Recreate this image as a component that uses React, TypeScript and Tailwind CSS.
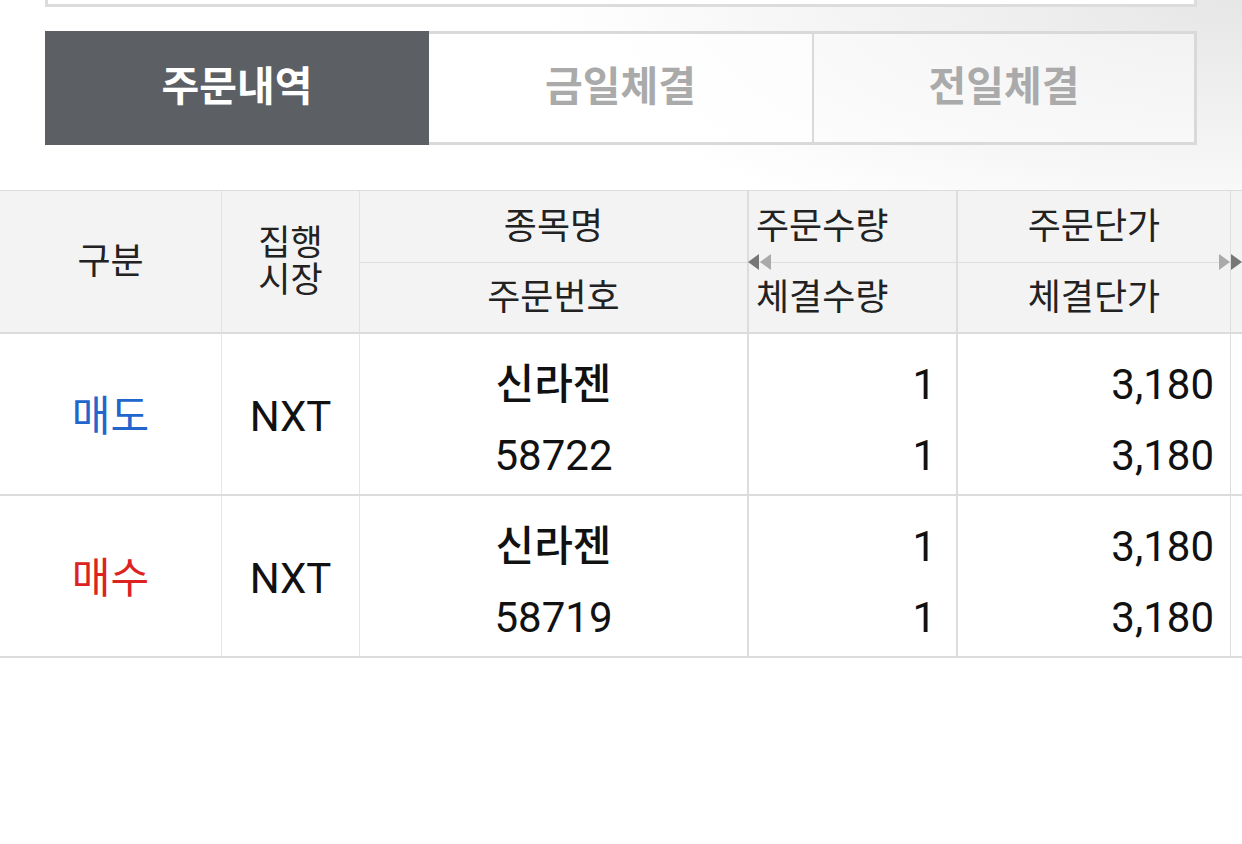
import React from "react"

const font = { fontFamily: "Roboto, 'Noto Sans CJK KR', sans-serif" }

const rows = [
  { side: "매도", color: "text-[#2266cc]", market: "NXT", name: "신라젠", no: "58722", qty: "1", fillQty: "1", price: "3,180", fillPrice: "3,180" },
  { side: "매수", color: "text-[#dd2222]", market: "NXT", name: "신라젠", no: "58719", qty: "1", fillQty: "1", price: "3,180", fillPrice: "3,180" },
]

function Arrows({ dir }: { dir: "left" | "right" }) {
  if (dir === "left") {
    return (
      <svg width="26" height="18" viewBox="0 0 26 18" className="absolute left-[748px] top-[62px]">
        <polygon points="0,9 11,1 11,17" fill="#777" />
        <polygon points="12,9 23,1 23,17" fill="#aaa" />
      </svg>
    )
  }
  return (
    <svg width="26" height="18" viewBox="0 0 26 18" className="absolute left-[1217px] top-[62px]">
      <polygon points="2,1 13,9 2,17" fill="#aaa" />
      <polygon points="14,1 25,9 14,17" fill="#777" />
    </svg>
  )
}

export default function App() {
  return (
    <div
      style={font}
      className="w-[1242px] h-[844px] overflow-hidden bg-[radial-gradient(ellipse_700px_260px_at_top_right,#e6e6e6,#ffffff)]"
    >
      {/* search box bottom edge */}
      <div className="mx-[45px] h-[7px] border-x-[3px] border-b-[3px] border-[#dcdcdc] bg-white" />

      {/* tabs */}
      <div className="mx-[45px] mt-[24px] flex h-[114px]">
        <div className="flex w-[384px] items-center justify-center bg-[#5c6064] text-[41px] font-bold text-white">
          주문내역
        </div>
        <div className="flex w-[385px] items-center justify-center border-y-[3px] border-r-2 border-[#d9d9d9] bg-white/70 text-[41px] font-bold text-[#aaaaaa]">
          금일체결
        </div>
        <div className="flex flex-1 items-center justify-center border-y-[3px] border-r-[3px] border-[#d9d9d9] bg-white/40 text-[41px] font-bold text-[#aaaaaa]">
          전일체결
        </div>
      </div>

      {/* table header */}
      <div className="relative mt-[45px] grid h-[144px] grid-cols-[222px_138px_389px_209px_273px_11px] grid-rows-[72px_70px] border-t border-b-2 border-[#dcdcdc] bg-[#f2f2f2]/90 text-[36px] text-[#222]">
        <div className="row-span-2 flex items-center justify-center border-r border-[#e2e2e2]">구분</div>
        <div className="row-span-2 flex flex-col items-center justify-center border-r border-[#e2e2e2] text-[35px] leading-[37px]">
          <span>집행</span>
          <span>시장</span>
        </div>
        <div className="flex items-center justify-center border-r-2 border-b border-[#dddddd]">종목명</div>
        <div className="flex items-center pl-[7px] border-r-2 border-b border-[#dddddd]">주문수량</div>
        <div className="flex items-center justify-center border-r border-b border-[#dddddd]">주문단가</div>
        <div className="border-b border-[#dddddd]" />
        <div className="col-start-3 flex items-center justify-center border-r-2 border-[#dddddd]">주문번호</div>
        <div className="flex items-center pl-[7px] border-r-2 border-[#dddddd]">체결수량</div>
        <div className="flex items-center justify-center border-r border-[#dddddd]">체결단가</div>
        <div />
        <Arrows dir="left" />
        <Arrows dir="right" />
      </div>

      {/* rows */}
      {rows.map((r) => (
        <div
          key={r.no}
          className="grid h-[162px] grid-cols-[222px_138px_389px_209px_273px_11px] border-b-2 border-[#dcdcdc] bg-white text-[42px] text-[#111]"
        >
          <div className={`flex items-center justify-center border-r border-[#e6e6e6] pt-[4px] ${r.color}`}>{r.side}</div>
          <div className="flex items-center justify-center border-r border-[#e6e6e6] pt-[4px]">{r.market}</div>
          <div className="flex flex-col items-center justify-center border-r-2 border-[#dddddd] pt-[12px] leading-[71px]">
            <span className="font-medium">{r.name}</span>
            <span>{r.no}</span>
          </div>
          <div className="flex flex-col items-end justify-center border-r-2 border-[#dddddd] pr-[20px] pt-[12px] leading-[71px]">
            <span>{r.qty}</span>
            <span>{r.fillQty}</span>
          </div>
          <div className="flex flex-col items-end justify-center border-r border-[#dddddd] pr-[16px] pt-[12px] leading-[71px]">
            <span>{r.price}</span>
            <span>{r.fillPrice}</span>
          </div>
          <div />
        </div>
      ))}
    </div>
  )
}
